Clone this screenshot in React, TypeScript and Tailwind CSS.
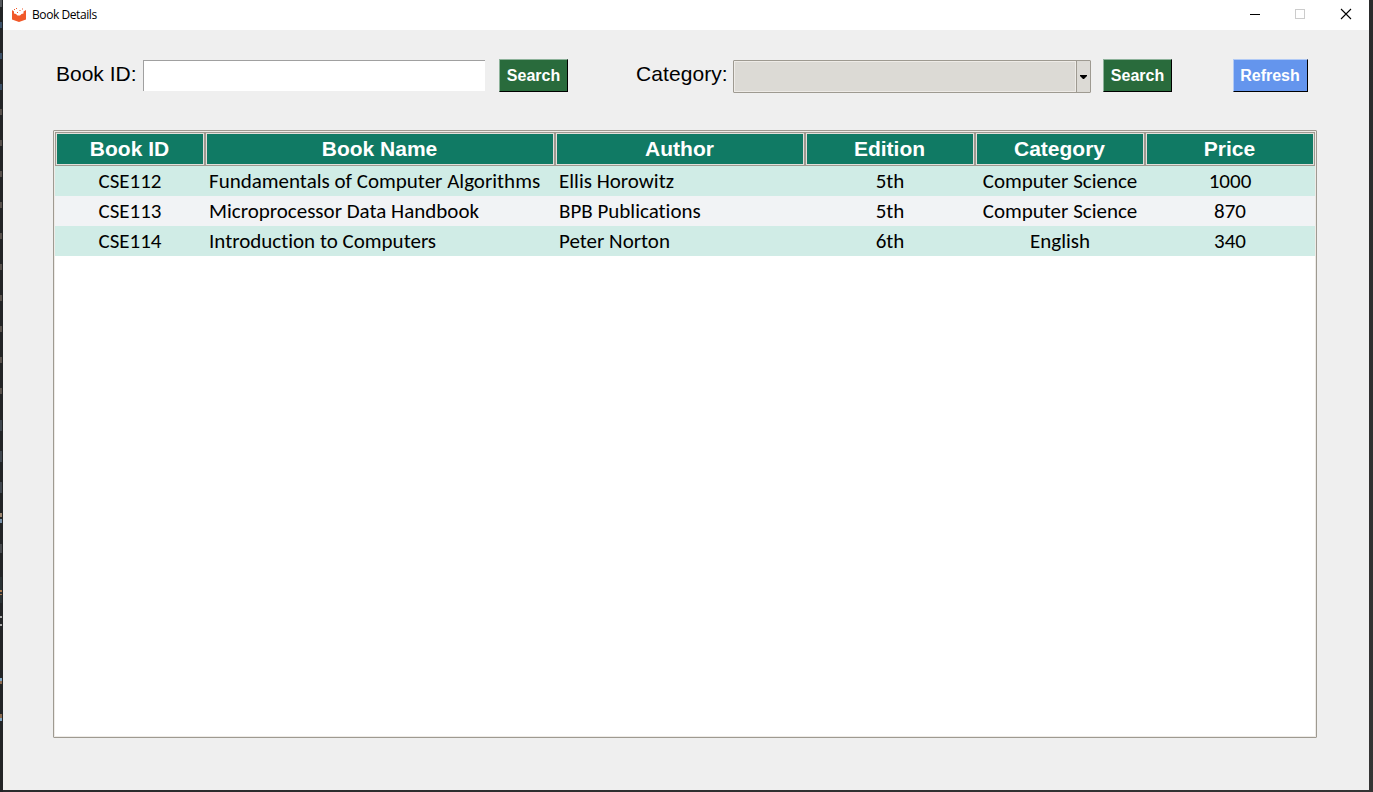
import type { ReactNode } from "react";

type Book = { id: string; name: string; author: string; edition: string; category: string; price: string };

const books: Book[] = [
  { id: "CSE112", name: "Fundamentals of Computer Algorithms", author: "Ellis Horowitz", edition: "5th", category: "Computer Science", price: "1000" },
  { id: "CSE113", name: "Microprocessor Data Handbook", author: "BPB Publications", edition: "5th", category: "Computer Science", price: "870" },
  { id: "CSE114", name: "Introduction to Computers", author: "Peter Norton", edition: "6th", category: "English", price: "340" },
];

const headings = ["Book ID", "Book Name", "Author", "Edition", "Category", "Price"];
const columns = "grid grid-cols-[150px_350px_250px_170px_170px_170px]";

// Slivers of the window behind: [top, height, colour]
const slivers: [number, number, string][] = [
  [0, 7, "#55585c"],
  [22, 6, "#3b5068"], [53, 6, "#3b5068"], [84, 6, "#3b5068"],
  [109, 6, "#56504c"], [140, 6, "#56504c"], [171, 6, "#56504c"], [202, 6, "#56504c"],
  [233, 6, "#56504c"], [264, 6, "#56504c"], [295, 6, "#56504c"], [326, 6, "#56504c"],
  [357, 6, "#56504c"], [388, 6, "#56504c"],
  [420, 11, "#3f464e"], [451, 11, "#3f464e"], [482, 11, "#3f464e"],
  [513, 4, "#9a8570"], [519, 4, "#7790a8"], [544, 9, "#46494d"],
  [577, 26, "#2a3235"], [590, 2, "#a87850"], [594, 1, "#a87850"],
  [616, 2, "#a8a8a8"], [624, 2, "#a8a8a8"],
  [678, 3, "#7fa3c0"], [681, 3, "#8a6a50"], [714, 4, "#8a6a50"], [718, 3, "#7fa3c0"],
];

function TkButton({ children, className }: { children: ReactNode; className: string }) {
  return (
    <button className={`flex h-[33px] shrink-0 items-center justify-center border text-[16px] leading-none font-bold text-white ${className}`}>
      {children}
    </button>
  );
}

function TitleBar() {
  return (
    <header className="flex h-[30px] items-center bg-white pl-[8px]">
      <svg className="h-[16px] w-[16px]" viewBox="0 0 16 16" fill="#f1592a">
        <path d="M1 3 3 4.500v2l2 .5 1.500 1.500H9L10.500 7l2-.5v-2L15 3v9.500L8 15l-7-2.500z" />
        <path d="M3 2h1v1H3zM5 1h1v1H5zM6 5h1v1H6zM8.500 3h1v1h-1zM11 1.500h1v1h-1z" />
      </svg>
      <h1 className="ml-[5px] font-['Open_Sans',sans-serif] text-[12px] tracking-[-0.42px] text-black">Book Details</h1>
      <div className="ml-auto flex items-center">
        <svg className="h-[30px] w-[46px]" viewBox="0 0 46 30" shapeRendering="crispEdges"><path d="M19 14.500h10" stroke="#000" /></svg>
        <svg className="h-[30px] w-[46px]" viewBox="0 0 46 30" shapeRendering="crispEdges"><path d="M18.500 9.500h9v9h-9z" fill="none" stroke="#ccc" /></svg>
        <svg className="h-[30px] w-[46px]" viewBox="0 0 46 30"><path d="m18 9 10 10M28 9l-10 10" stroke="#000" strokeWidth="1.100" /></svg>
      </div>
    </header>
  );
}

export default function App() {
  return (
    <div className="flex h-[792px] w-[1373px] overflow-hidden bg-linear-to-br from-[#202224] to-[#343434] font-['Liberation_Sans',Arial,sans-serif] text-black">
      <svg className="h-[792px] w-[3px] shrink-0" viewBox="0 0 3 792">
        <rect width="3" height="792" fill="#222426" />
        {slivers.map(([y, height, fill]) => (
          <rect key={y} x="0" y={y} width="2" height={height} fill={fill} />
        ))}
      </svg>
      <main className="flex h-[790px] w-[1366px] shrink-0 flex-col bg-[#efefef]">
        <TitleBar />
        <section className="flex h-[100px] items-start pt-[29px] pl-[53px]">
          <label className="flex items-start">
            <span className="w-[87px] pt-[2px] text-[21px] leading-[26px] whitespace-nowrap">Book ID:</span>
            <input className="mt-px h-[31px] w-[342px] border-t border-l border-[#a0a0a0] bg-white outline-none" />
          </label>
          <TkButton className="ml-[14px] w-[69px] border-t-[#8db29a] border-r-black border-b-black border-l-[#8db29a] bg-[#296b3c]">Search</TkButton>
          <span className="ml-[68px] w-[97px] pt-[2px] text-[21px] leading-[26px] tracking-[0.08px] whitespace-nowrap">Category:</span>
          <div className="mt-px flex h-[33px] w-[358px] rounded-[1px] border border-[#9e9a91]">
            <div className="flex-1 border border-[#eeebe7] bg-[#dcdad5]" />
            <div className="flex w-[14px] items-center justify-center border-l border-[#9e9a91] bg-[#dcdad5]">
              <svg className="h-[4px] w-[7px]" viewBox="0 0 7 4"><path d="M0 0h7v1L4 4H3L0 1z" /></svg>
            </div>
          </div>
          <TkButton className="ml-[12px] w-[69px] border-t-[#8db29a] border-r-black border-b-black border-l-[#8db29a] bg-[#296b3c]">Search</TkButton>
          <TkButton className="ml-[61px] w-[75px] border-t-[#b1caf6] border-r-black border-b-black border-l-[#b1caf6] bg-[#6495ed] pr-px">Refresh</TkButton>
        </section>
        <section className="ml-[50px] h-[608px] w-[1264px] rounded-[1px] border border-[#9e9a91] bg-white">
          <div className="h-full border border-[#eeebe7]">
            <div className={`${columns} h-[34px]`}>
              {headings.map((heading) => (
                <div key={heading} className="border border-[#9e9a91]">
                  <div className="flex h-full items-center justify-center border border-[#e2dfda] bg-[#107a64] pr-px pb-[2px] text-[21px] leading-none font-bold text-white">{heading}</div>
                </div>
              ))}
            </div>
            {books.map((book) => (
              <div key={book.id} className={`${columns} h-[30px] items-center pt-px text-center font-[Carlito,Calibri,Lato,sans-serif] text-[21px] leading-[29px] whitespace-nowrap [font-variant-ligatures:none] even:bg-[#d0ece6] odd:bg-[#f1f3f5]`}>
                <span>{book.id}</span>
                <span className="pl-[4px] text-left">{book.name}</span>
                <span className="pl-[4px] text-left">{book.author}</span>
                <span>{book.edition}</span>
                <span>{book.category}</span>
                <span>{book.price}</span>
              </div>
            ))}
          </div>
        </section>
      </main>
    </div>
  );
}
